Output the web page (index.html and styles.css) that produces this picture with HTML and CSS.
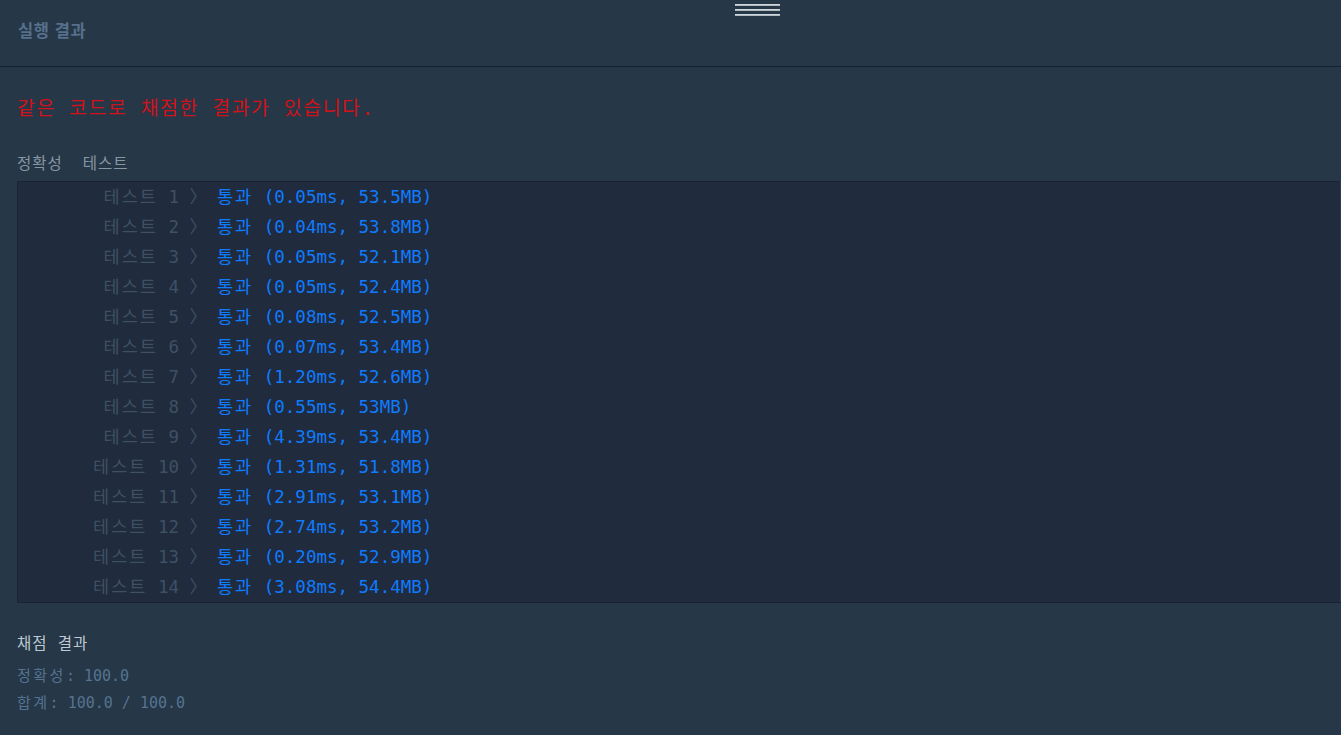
FILE: index.html
```html
<!DOCTYPE html>
<html lang="ko">
<head>
    <meta charset="UTF-8">
    <meta name="viewport" content="width=device-width, initial-scale=1.0">
    <title>실행 결과</title>
    <link rel="stylesheet" href="styles.css">
</head>
<body>
    <div class="panel">
        <div class="handle"><span></span><span></span><span></span></div>
        <div class="panel-header">
            <h5 class="panel-title">실행 결과</h5>
        </div>
        <div class="console">
            <p class="console-message">같은 코드로 채점한 결과가 있습니다.</p>
            <p class="console-heading"><span class="gap">정확성</span>테스트</p>
            <table class="console-test-group">
                <tbody>
                    <tr><td class="result-label"><span class="ko">테스트</span> 1 〉</td><td class="result passed"><span class="ko">통과</span> (0.05ms, 53.5MB)</td></tr>
                    <tr><td class="result-label"><span class="ko">테스트</span> 2 〉</td><td class="result passed"><span class="ko">통과</span> (0.04ms, 53.8MB)</td></tr>
                    <tr><td class="result-label"><span class="ko">테스트</span> 3 〉</td><td class="result passed"><span class="ko">통과</span> (0.05ms, 52.1MB)</td></tr>
                    <tr><td class="result-label"><span class="ko">테스트</span> 4 〉</td><td class="result passed"><span class="ko">통과</span> (0.05ms, 52.4MB)</td></tr>
                    <tr><td class="result-label"><span class="ko">테스트</span> 5 〉</td><td class="result passed"><span class="ko">통과</span> (0.08ms, 52.5MB)</td></tr>
                    <tr><td class="result-label"><span class="ko">테스트</span> 6 〉</td><td class="result passed"><span class="ko">통과</span> (0.07ms, 53.4MB)</td></tr>
                    <tr><td class="result-label"><span class="ko">테스트</span> 7 〉</td><td class="result passed"><span class="ko">통과</span> (1.20ms, 52.6MB)</td></tr>
                    <tr><td class="result-label"><span class="ko">테스트</span> 8 〉</td><td class="result passed"><span class="ko">통과</span> (0.55ms, 53MB)</td></tr>
                    <tr><td class="result-label"><span class="ko">테스트</span> 9 〉</td><td class="result passed"><span class="ko">통과</span> (4.39ms, 53.4MB)</td></tr>
                    <tr><td class="result-label"><span class="ko">테스트</span> 10 〉</td><td class="result passed"><span class="ko">통과</span> (1.31ms, 51.8MB)</td></tr>
                    <tr><td class="result-label"><span class="ko">테스트</span> 11 〉</td><td class="result passed"><span class="ko">통과</span> (2.91ms, 53.1MB)</td></tr>
                    <tr><td class="result-label"><span class="ko">테스트</span> 12 〉</td><td class="result passed"><span class="ko">통과</span> (2.74ms, 53.2MB)</td></tr>
                    <tr><td class="result-label"><span class="ko">테스트</span> 13 〉</td><td class="result passed"><span class="ko">통과</span> (0.20ms, 52.9MB)</td></tr>
                    <tr><td class="result-label"><span class="ko">테스트</span> 14 〉</td><td class="result passed"><span class="ko">통과</span> (3.08ms, 54.4MB)</td></tr>
                </tbody>
            </table>
            <p class="console-heading summary">채점 결과</p>
            <p class="console-score"><span class="ko">정확성</span>: 100.0</p>
            <p class="console-score"><span class="ko">합계</span>: 100.0 / 100.0</p>
        </div>
    </div>
</body>
</html>
```

FILE: styles.css
```css
body {
    margin: 0;
    background: #263747;
    font-family: "DejaVu Sans Mono", "Noto Sans CJK KR", monospace;
    overflow: hidden;
}

.panel {
    position: relative;
    height: 735px;
}

/* resize grip at the top of the panel */
.handle {
    position: absolute;
    top: 4px;
    left: 735px;
    width: 45px;
    display: flex;
    flex-direction: column;
    gap: 3px;
}

.handle span {
    display: block;
    height: 2px;
    background: #aeb9c1;
    border-top: 1px solid #cfd7dc;
    box-sizing: border-box;
}

.panel-header {
    height: 49px;
    border-bottom: 1px solid #172130;
    padding: 17px 0 0 18px;
}

.panel-title {
    margin: 0;
    font-family: "Noto Sans CJK KR", "Noto Sans", sans-serif;
    font-size: 16.5px;
    font-weight: 700;
    letter-spacing: 0.6px;
    line-height: 26px;
    color: #56708d;
}

.console {
    padding-left: 17px;
}

.console p {
    margin: 0;
}

.console-message {
    margin-top: 27px !important;
    font-size: 19.5px;
    letter-spacing: 1.5px;
    line-height: 30px;
    color: #d0121b;
}

.console-heading {
    margin-top: 30px !important;
    font-size: 15.5px;
    letter-spacing: 1px;
    line-height: 20px;
    color: #8895a3;
}

.console-heading .gap {
    margin-right: 20px;
}

.console-test-group {
    margin-top: 7px;
    width: 100%;
    border-collapse: collapse;
    background: #202b3d;
    border: 1px solid #1a2331;
    border-right-color: #2f3f50;
    font-size: 17.5px;
}

.console-test-group td {
    height: 30px;
    padding: 0;
    line-height: 30px;
    white-space: nowrap;
}

.console-test-group .ko {
    letter-spacing: 2px;
}

.result-label {
    width: 189px;
    text-align: right;
    color: #3f5064;
}

.result {
    padding-left: 10px !important;
}

.passed {
    color: #0f7bff;
}

.summary {
    margin-top: 31px !important;
    color: #bfc9d3;
}

.console-score {
    font-size: 15px;
    line-height: 27px;
    color: #557390;
}

.console-score .ko {
    letter-spacing: 2.5px;
}

.summary + .console-score {
    margin-top: 9px !important;
}
```
